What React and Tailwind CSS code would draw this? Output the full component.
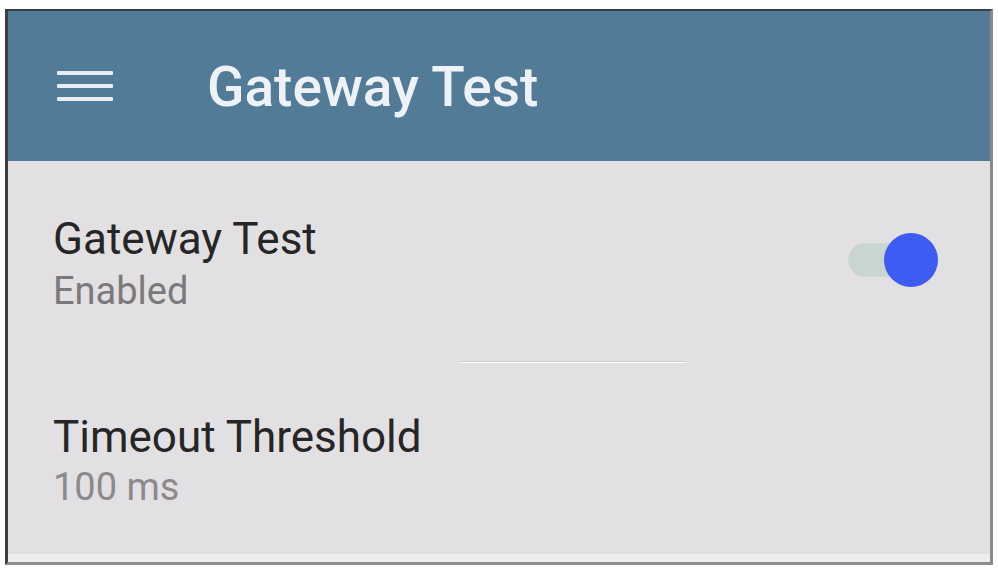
export default function App() {
  const font = { fontFamily: 'Roboto, "Noto Sans", sans-serif' };
  return (
    <div className="w-[998px] h-[568px] bg-white overflow-hidden" style={font}>
      <div className="ml-[5px] mt-[9px] w-[988px] h-[556px] border-l-[3px] border-t-[2px] border-r-[3px] border-b-[3px] border-l-[#3d3d3d] border-t-[#3a3f44] border-r-[#8a8a8a] border-b-[#8e8e8e] flex flex-col bg-[#e3e0e3]">
        <div className="h-[150px] shrink-0 bg-[#527b98] flex items-center">
          <svg width="56" height="32" viewBox="0 0 56 32" className="ml-[49px] mt-[2px]">
            <rect x="0" y="0" width="56" height="4" rx="1" fill="#e6eef4" />
            <rect x="0" y="13" width="56" height="4" rx="1" fill="#e6eef4" />
            <rect x="0" y="26" width="56" height="4" rx="1" fill="#e6eef4" />
          </svg>
          <div className="ml-[94px] mt-[2px] text-[55px] leading-[62px] font-medium text-[#eef2f6]">
            Gateway Test
          </div>
        </div>
        <div className="flex-1 flex flex-col">
          <div className="flex items-center pt-[52px]">
            <div className="ml-[45px] flex-1 flex flex-col">
              <div className="text-[44px] leading-[52px] text-[#262626]">Gateway Test</div>
              <div className="mt-[4px] text-[38px] leading-[44px] text-[#7a7a7a]">Enabled</div>
            </div>
            <div className="relative w-[86px] h-[34px] mr-[56px] mt-[-6px]">
              <div className="absolute inset-0 rounded-full bg-[#c9d6d0]" />
              <div className="absolute right-[-4px] top-[-10px] w-[54px] h-[54px] rounded-full bg-[#3f5cf2]" />
            </div>
          </div>
          <div className="mt-[48px] ml-[452px] w-[226px] h-[2px] bg-[#cfcccf] border-b border-white" />
          <div className="pt-[48px] ml-[45px] flex flex-col">
            <div className="text-[44px] leading-[52px] text-[#262626]">Timeout Threshold</div>
            <div className="mt-[2px] text-[38px] leading-[44px] text-[#8a8a8a]">100 ms</div>
          </div>
          <div className="flex-1" />
          <div className="h-[8px] bg-[#eeecee]" />
        </div>
      </div>
    </div>
  );
}
